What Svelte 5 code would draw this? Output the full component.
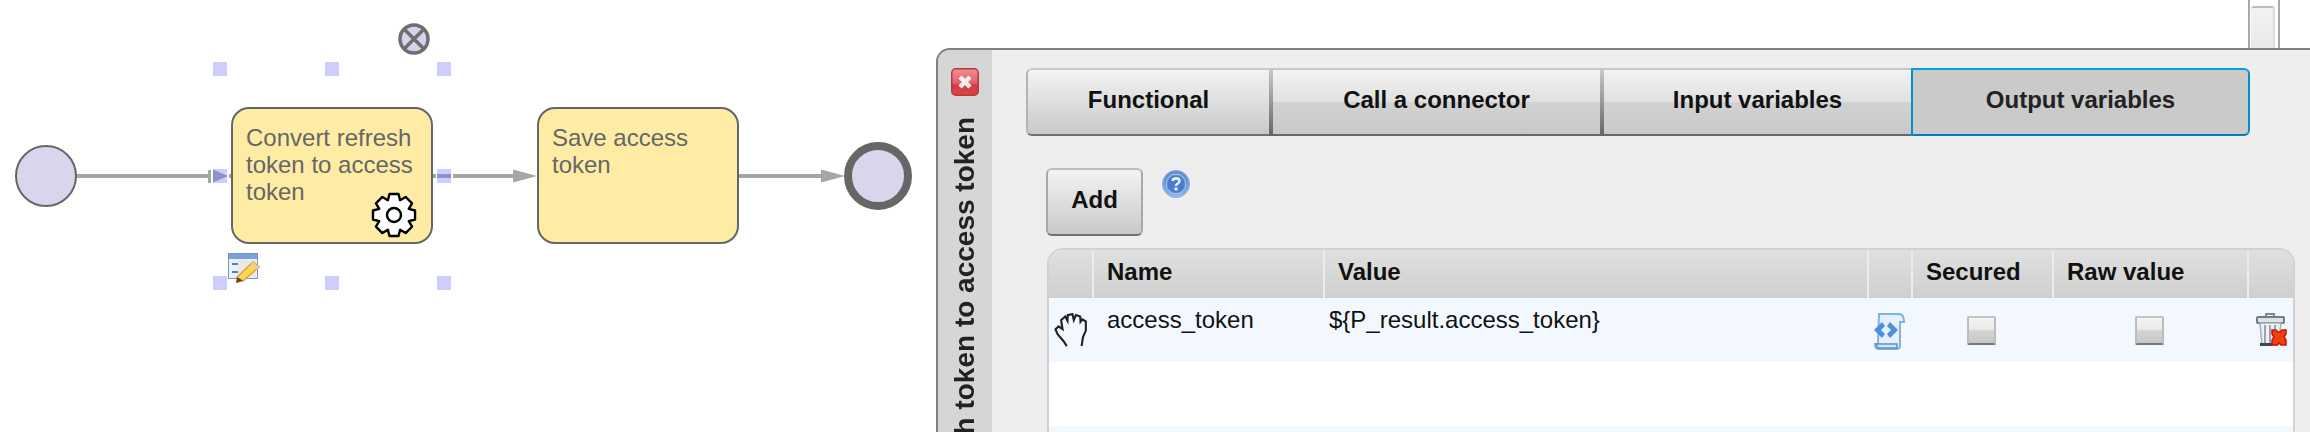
<script>
  const gear = (() => {
    const cx = 24, cy = 24, teeth = 8, outer = 21.5, inner = 16;
    const pts = [];
    for (let i = 0; i < teeth; i++) {
      const a = (i / teeth) * Math.PI * 2 - Math.PI / 2;
      const step = (Math.PI * 2) / teeth;
      const seq = [[inner, -0.5], [outer, -0.27], [outer, 0.27], [inner, 0.5]];
      for (const [r, f] of seq) {
        const t = a + f * step;
        pts.push(`${(cx + r * Math.cos(t)).toFixed(2)} ${(cy + r * Math.sin(t)).toFixed(2)}`);
      }
    }
    return 'M' + pts.join('L') + 'Z';
  })();

  const tabs = [
    { label: 'Functional', cls: 'first' },
    { label: 'Call a connector', cls: 'hard' },
    { label: 'Input variables', cls: 'hard' },
    { label: 'Output variables', cls: 'active' }
  ];
  const columns = ['', 'Name', 'Value', '', 'Secured', 'Raw value', ''];
  const handles = ['h1', 'h2', 'h3', 'h4', 'h5', 'h6', 'h7', 'h8'];
</script>

<div class="page">
  <div class="canvas">
    <svg class="wires" width="930" height="432" viewBox="0 0 930 432">
      <g fill="#a6a6a6">
        <rect x="76" y="174" width="132" height="4" />
        <rect x="208" y="170" width="3" height="13" />
        <path d="M213 169.500 L228 176 L213 182.500Z" />
        <rect x="229" y="174" width="3" height="4" />
        <rect x="432" y="174" width="4" height="4" />
        <rect x="437" y="174" width="14" height="4" />
        <rect x="453" y="174" width="62" height="4" />
        <path d="M513 169.500 L537 176 L513 182.500Z" />
        <rect x="738" y="174" width="84" height="4" />
        <path d="M821 169.500 L845 176 L821 182.500Z" />
      </g>
      <circle cx="46" cy="176" r="30" fill="#d8d6ec" stroke="#666" stroke-width="2" />
      <circle cx="878" cy="176" r="30" fill="#d8d6ec" stroke="#666" stroke-width="8" />
      <g class="cancel">
        <circle cx="414" cy="39" r="14" fill="#d4d2ec" stroke="#6e6e6e" stroke-width="3.500" />
        <path d="M405 30 L423 48 M423 30 L405 48" stroke="#6e6e6e" stroke-width="3.500" />
      </g>
    </svg>

    <div class="task one">Convert refresh token to access token</div>
    <div class="task two">Save access token</div>

    <svg class="gear" width="48" height="48" viewBox="0 0 48 48">
      <path d={gear} fill="#fff" stroke="#000" stroke-width="2.400" stroke-linejoin="round" />
      <circle cx="24" cy="24" r="7" fill="#fff" stroke="#000" stroke-width="2.400" />
    </svg>

    <svg class="form-icon" width="32" height="31" viewBox="0 0 32 31">
      <rect x="0.500" y="0.500" width="29" height="25" fill="#eef2f8" stroke="#6f96cc" />
      <rect x="1" y="1" width="28" height="5" fill="#7ba2d6" />
      <rect x="10" y="7" width="18" height="17" fill="#e8e8e4" />
      <rect x="4" y="10" width="6" height="2" fill="#4f7fd0" />
      <rect x="4" y="18" width="6" height="2" fill="#4f7fd0" />
      <path d="M9 24 L25 9 L31 14 L15 28Z" fill="#f6d84e" stroke="#d9a05e" stroke-width="1.500" />
      <path d="M25 9 L31 14 L29 16 L23 11Z" fill="#efc9a6" />
      <path d="M9 24 L15 28 L8 30Z" fill="#7a3c10" />
    </svg>

    {#each handles as h}
      <span class="handle {h}"></span>
    {/each}
  </div>

  <div class="scroller"><span class="thumb"></span></div>

  <section class="dialog">
    <aside class="side">
      <svg class="close" width="28" height="28" viewBox="0 0 28 28">
        <defs>
          <linearGradient id="closeFill" x1="0" y1="0" x2="0" y2="1">
            <stop offset="0" stop-color="#ee8f93" />
            <stop offset="0.550" stop-color="#e4606a" />
            <stop offset="0.600" stop-color="#d63a45" />
            <stop offset="1" stop-color="#d8483c" />
          </linearGradient>
        </defs>
        <rect x="0.750" y="0.750" width="26.500" height="26.500" rx="4" fill="url(#closeFill)" stroke="#b8383c" stroke-width="1.500" />
        <path d="M9 9 L19 19 M19 9 L9 19" stroke="#f4eeee" stroke-width="4.500" />
      </svg>
      <h2 class="title">Convert refresh token to access token</h2>
    </aside>

    <div class="body">
      <nav class="tabs">
        {#each tabs as t}
          <button class={['tab', t.cls]}>{t.label}</button>
        {/each}
      </nav>

      <div class="actions">
        <button class="add">Add</button>
        <svg class="help" width="28" height="28" viewBox="0 0 28 28">
          <defs>
            <radialGradient id="helpFill" cx="0.500" cy="0.400" r="0.600">
              <stop offset="0" stop-color="#7ea6e0" />
              <stop offset="0.650" stop-color="#5d8dd6" />
              <stop offset="1" stop-color="#a9c8ee" />
            </radialGradient>
          </defs>
          <circle cx="14" cy="14" r="13.500" fill="url(#helpFill)" stroke="#7fa8dc" />
          <circle cx="14" cy="14" r="10" fill="none" stroke="#a9c8ee" stroke-width="1" />
          <circle cx="14" cy="14" r="8.500" fill="#4a7ccb" />
          <path d="M10.500 11 C11 7.500 17.500 7.500 17.500 11 C17.500 13.500 14 13.500 14 16" fill="none" stroke="#e8eef8" stroke-width="2.600" />
          <rect x="12.500" y="17.500" width="3" height="3" fill="#e8eef8" />
        </svg>
      </div>

      <div class="table">
        <div class="grid head">
          {#each columns as c}
            <div class="th">{c}</div>
          {/each}
        </div>

        <div class="grid row tint">
          <div class="cell">
            <svg class="hand" width="34" height="36" viewBox="0 0 96 102">
              <path d="M36 94 L27 80 L10 60 L4 46 L13 38 L24 46 L20 20 L32 10 L38 22 L39 6 L52 3 L56 20 L62 6 L74 10 L75 25 L80 18 L90 24 L90 50 L82 68 L78 94" fill="none" stroke="#222" stroke-width="6" stroke-linejoin="miter" />
            </svg>
          </div>
          <div class="cell text name">access_token</div>
          <div class="cell text value">{'${P_result.access_token}'}</div>
          <div class="cell center">
            <svg class="script" width="34" height="37" viewBox="0 0 32 37">
              <path d="M6 1 H26 C31 1 31 6 31 9 H27 V33 C27 36 25 36 23 36 H6 C2 36 2 33 2 31 H5Z" fill="#e6f0fa" stroke="#7fb2e2" stroke-width="2" />
              <path d="M3 31 H24 V35 H5Z" fill="#d8e8f6" stroke="#5f8fc6" stroke-width="1.500" />
              <path d="M9 9 L1 17 L9 25 L12 21 L8 17 L12 13Z M17 9 L25 17 L17 25 L14 21 L18 17 L14 13Z" fill="#4a90e2" />
            </svg>
          </div>
          <div class="cell center"><span class="check"></span></div>
          <div class="cell center"><span class="check"></span></div>
          <div class="cell center">
            <svg class="trash" width="32" height="33" viewBox="0 0 32 33">
              <path d="M10 3 V1 H18 V3" fill="none" stroke="#7e8792" stroke-width="2" />
              <rect x="1" y="4" width="27" height="6" rx="1" fill="#dfe3e8" stroke="#727c88" stroke-width="2" />
              <path d="M4 10 L6 32 H22 L25 10Z" fill="#eef0f3" stroke="#a7adb5" stroke-width="1.500" />
              <path d="M9 12 V30 M14 12 V30 M19 12 V24" stroke="#9ca3ac" stroke-width="2" />
              <rect x="4" y="30" width="12" height="3" fill="#3c4656" />
              <path d="M16 17 H20 L22 19 L24 19 L26 17 H30 V21 L28 24 L30 27 V32 H25 L23 30 L21 32 H16 V27 L18 24 L16 21Z" fill="#f2400c" stroke="#c01806" stroke-width="1.500" />
            </svg>
          </div>
        </div>

        <div class="grid row"></div>
        <div class="grid row tint"></div>
      </div>
    </div>
  </section>
</div>

<style>
  :global(body) {
    margin: 0;
    background: #fff;
    overflow: hidden;
  }

  .page {
    position: relative;
    width: 2310px;
    height: 432px;
    overflow: hidden;
    font-family: "Liberation Sans", Arial, sans-serif;
  }

  .canvas {
    position: absolute;
    inset: 0 auto 0 0;
    width: 930px;
  }

  .wires,
  .gear,
  .form-icon {
    position: absolute;
  }

  .wires {
    left: 0;
    top: 0;
  }

  .cancel {
    filter: blur(0.5px);
  }

  .gear {
    left: 370px;
    top: 191px;
  }

  .form-icon {
    left: 228px;
    top: 253px;
  }

  .task {
    position: absolute;
    top: 106.500px;
    box-sizing: border-box;
    width: 202px;
    height: 137px;
    padding: 15px 8px 0 13px;
    background: #feeca5;
    border: 2px solid #666;
    border-radius: 18px;
    color: #666;
    font-size: 24px;
    line-height: 27px;
  }

  .one {
    left: 231px;
  }

  .two {
    left: 537px;
  }

  .handle {
    position: absolute;
    width: 14px;
    height: 14px;
    background: rgba(102, 102, 255, 0.33);
  }

  .h1 { left: 213px; top: 62px; }
  .h2 { left: 325px; top: 62px; }
  .h3 { left: 437px; top: 62px; }
  .h4 { left: 213px; top: 169px; }
  .h5 { left: 437px; top: 169px; }
  .h6 { left: 213px; top: 276px; }
  .h7 { left: 325px; top: 276px; }
  .h8 { left: 437px; top: 276px; }

  .scroller {
    position: absolute;
    left: 2248px;
    top: 0;
    box-sizing: border-box;
    width: 32px;
    height: 50px;
    padding: 6px 3px 0 1px;
    border: solid #a8a8a8;
    border-width: 0 2px;
    background: #fff;
  }

  .thumb {
    display: block;
    height: 100%;
    border-top: 2px solid #bdbdbd;
    border-right: 2px solid #ddd;
    border-radius: 3px 3px 0 0;
    background: linear-gradient(#f2f2f2, #e8e8e8);
  }

  .dialog {
    position: absolute;
    left: 936px;
    top: 48px;
    right: 0;
    height: 400px;
    display: flex;
    box-sizing: border-box;
    overflow: hidden;
    border: solid #808080;
    border-width: 2px 0 0 2px;
    border-top-left-radius: 14px;
    background: #eee;
  }

  .side {
    flex: 0 0 54px;
    display: flex;
    flex-direction: column;
    align-items: center;
    background: #d5d6d8;
    padding-top: 18px;
  }

  .close {
    flex: none;
  }

  .title {
    flex: none;
    margin: 21px 0 0;
    writing-mode: vertical-rl;
    transform: rotate(180deg);
    white-space: nowrap;
    color: #222;
    font-size: 28px;
    font-weight: 700;
    line-height: 32px;
    letter-spacing: 0;
  }

  .body {
    flex: 1;
    min-width: 0;
    padding: 18px 15px 0 34px;
    display: flex;
    flex-direction: column;
  }

  .tabs {
    display: flex;
    flex: none;
    width: 1224px;
    height: 68px;
  }

  .tab {
    box-sizing: border-box;
    height: 100%;
    padding: 0 0 4px;
    border: solid;
    border-width: 2px 0;
    border-color: #c8c8c8 #c8c8c8 #707070;
    background: linear-gradient(#f2f3f2 0%, #e0e0e0 50%, #d2d2d2 50%, #c9c9c9 100%);
    color: #111;
    font: 700 24px "Liberation Sans", Arial, sans-serif;
  }

  .first {
    flex: 0 0 243px;
    border-left: 2px solid #b4b4b4;
    border-radius: 6px 0 0 6px;
    background: linear-gradient(#f2f3f2, #c9c9c9);
  }

  .hard {
    border-left: 4px solid;
    border-image: linear-gradient(#c8c8c8, #666) 1;
    border-top-width: 2px;
    border-bottom-width: 2px;
    border-right-width: 0;
  }

  .tabs .hard:nth-child(2) {
    flex: 0 0 331px;
  }

  .tabs .hard:nth-child(3) {
    flex: 0 0 311px;
  }

  .active {
    flex: 1;
    border: 2px solid;
    border-color: #00a0e0 #0090c8 #0080b4;
    border-radius: 0 6px 6px 0;
    background: #cacaca;
    color: #222;
  }

  .actions {
    display: flex;
    flex: none;
    align-items: flex-start;
    gap: 19px;
    margin: 32px 0 12px 20px;
  }

  .add {
    box-sizing: border-box;
    width: 97px;
    height: 68px;
    padding: 0 0 4px;
    border: 2px solid;
    border-color: #bdbdbd #a8a8a8 #707070;
    border-radius: 6px;
    background: linear-gradient(#f2f3f2, #c9c9c9);
    color: #111;
    font: 700 24px "Liberation Sans", Arial, sans-serif;
  }

  .help {
    margin-top: 2px;
  }

  .table {
    flex: none;
    margin-left: 21px;
    box-sizing: border-box;
    border: solid #d2d2d2;
    border-width: 2px 2px 0;
    border-radius: 16px 16px 0 0;
    overflow: hidden;
  }

  .grid {
    display: grid;
    grid-template-columns: 43px 231px 544px 44px 141px 195px 1fr;
  }

  .head {
    height: 48px;
    background: linear-gradient(#dfe0df, #cfcfcf);
  }

  .th {
    box-sizing: border-box;
    padding: 8px 0 0 13px;
    border-left: 2px solid #ececec;
    color: #111;
    font-size: 24px;
    font-weight: 700;
    line-height: 28px;
  }

  .th:first-child {
    border-left: 0;
  }

  .row {
    height: 64px;
    background: #fff;
  }

  .tint {
    background: #f3f8ff;
  }

  .cell {
    display: flex;
    min-width: 0;
  }

  .text {
    padding-top: 8px;
    color: #111;
    font-size: 24px;
    line-height: 27px;
  }

  .name {
    padding-left: 15px;
  }

  .value {
    padding-left: 6px;
  }

  .center {
    justify-content: center;
    padding-top: 15px;
  }

  .hand {
    margin: 15px 0 0 5px;
  }

  .trash {
    margin-left: 4px;
  }

  .check {
    box-sizing: border-box;
    width: 29px;
    height: 29px;
    margin-top: 3px;
    border: 2px solid;
    border-color: #c4c4c4 #bcbcbc #777;
    border-radius: 2px;
    background: linear-gradient(#f4f4f4 0%, #e8e8e8 50%, #d4d4d4 50%, #c8c8c8 100%);
  }
</style>
